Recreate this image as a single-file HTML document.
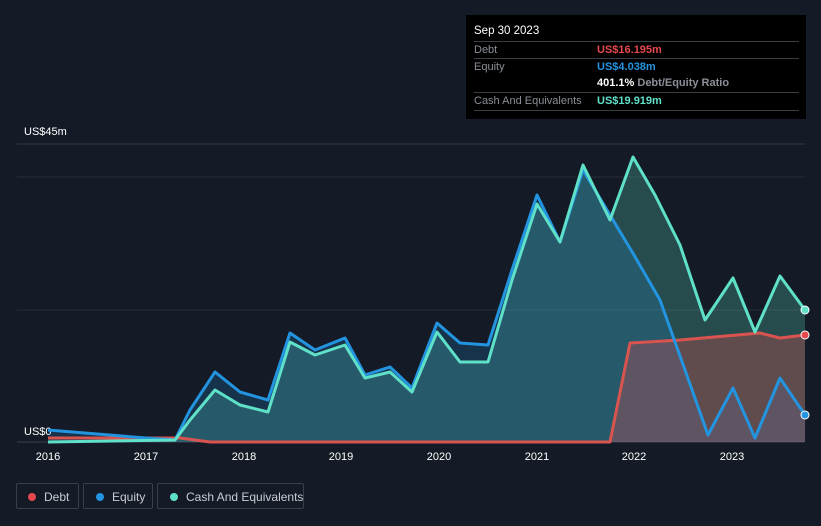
<!DOCTYPE html><html><head><style>
body{margin:0;width:821px;height:526px;background:#151b26;font-family:"Liberation Sans",sans-serif;overflow:hidden;position:relative}
.tt{position:absolute;left:466px;top:15px;width:340px;height:104px;background:#000;font-size:11px;color:#8a8f98}
.tt .h{position:absolute;left:8px;top:10px;color:#fff;font-size:11.5px}
.row{position:absolute;left:8px;width:325px;border-top:1px solid #3a3d44;height:17px;line-height:17px;white-space:nowrap}
.row span{position:absolute;left:123px;font-weight:bold}
.leg{position:absolute;top:483px;height:26px;border:1px solid #3a3f4a;border-radius:2px;color:#c9ccd2;font-size:12px;line-height:26px;box-sizing:border-box;white-space:nowrap}
.leg i{position:absolute;top:9px;width:8px;height:8px;border-radius:50%}
</style></head><body>
<svg width="821" height="526" style="position:absolute;left:0;top:0">
<line x1="17" y1="144" x2="805" y2="144" stroke="#333a46"/>
<line x1="17" y1="177" x2="805" y2="177" stroke="#262d38"/>
<line x1="17" y1="310" x2="805" y2="310" stroke="#262d38"/>
<line x1="17" y1="442" x2="805" y2="442" stroke="#3a404b"/>
<text x="24" y="135" fill="#fff" font-size="11">US$45m</text>
<text x="24" y="435" fill="#fff" font-size="11">US$0</text>
<g fill="#fff" font-size="11" text-anchor="middle">
<text x="48" y="460">2016</text><text x="146" y="460">2017</text><text x="244" y="460">2018</text><text x="341" y="460">2019</text><text x="439" y="460">2020</text><text x="537" y="460">2021</text><text x="634" y="460">2022</text><text x="732" y="460">2023</text></g>
<path d="M48,442 L175,440 190,420 215,390 240,405 268,412 290,342 315,355 345,345 365,378 390,372 412,392 437,332 460,362 488,362 512,280 537,204 560,242 583,165 610,220 633,157 655,195 680,245 705,320 733,278 755,332 780,276 805,310 L805,442Z" fill="#5fe0c8" fill-opacity="0.25"/>
<path d="M48,430 L146,438 175,440 190,410 215,372 240,392 268,400 290,333 315,350 345,338 365,375 390,367 412,388 437,323 460,343 488,345 512,270 537,195 560,242 583,170 610,215 634,255 660,300 685,370 708,435 733,388 755,438 780,378 805,415 L805,442 48,442Z" fill="#2394df" fill-opacity="0.2"/>
<path d="M610,442 L630,343 680,340 760,333 780,338 805,335 L805,442Z" fill="#e5484d" fill-opacity="0.3"/>
<g fill="none" stroke-width="3" stroke-linejoin="round">
<path d="M48,438 L180,438 210,442 610,442 630,343 680,340 760,333 780,338 805,335" stroke="#d9534f"/>
<path d="M48,430 L146,438 175,440 190,410 215,372 240,392 268,400 290,333 315,350 345,338 365,375 390,367 412,388 437,323 460,343 488,345 512,270 537,195 560,242 583,170 610,215 634,255 660,300 685,370 708,435 733,388 755,438 780,378 805,415" stroke="#2394df"/>
<path d="M48,442 L175,440 190,420 215,390 240,405 268,412 290,342 315,355 345,345 365,378 390,372 412,392 437,332 460,362 488,362 512,280 537,204 560,242 583,165 610,220 633,157 655,195 680,245 705,320 733,278 755,332 780,276 805,310" stroke="#5fe0c8"/>
</g>
<circle cx="805" cy="335" r="4" fill="#e5484d" stroke="#fff"/>
<circle cx="805" cy="415" r="4" fill="#2394df" stroke="#fff"/>
<circle cx="805" cy="310" r="4" fill="#5fe0c8" stroke="#fff"/>
</svg>
<div class="tt"><div class="h">Sep 30 2023</div>
<div class="row" style="top:26px">Debt<span style="color:#e5484d">US$16.195m</span></div>
<div class="row" style="top:43px">Equity<span style="color:#2394df">US$4.038m</span></div>
<div class="row" style="top:60px;border-top:none"><span style="color:#fff">401.1% <b style="color:#8a8f98">Debt/Equity Ratio</b></span></div>
<div class="row" style="top:77px">Cash And Equivalents<span style="color:#5fe0c8">US$19.919m</span></div>
<div class="row" style="top:95px;height:0"></div></div>
<div class="leg" style="left:16px;width:63px"><i style="left:11px;background:#e5484d"></i><span style="position:absolute;left:27px">Debt</span></div>
<div class="leg" style="left:83px;width:70px"><i style="left:12px;background:#2394df"></i><span style="position:absolute;left:28px">Equity</span></div>
<div class="leg" style="left:157px;width:147px"><i style="left:12px;background:#5fe0c8"></i><span style="position:absolute;left:28px">Cash And Equivalents</span></div>
</body></html>
